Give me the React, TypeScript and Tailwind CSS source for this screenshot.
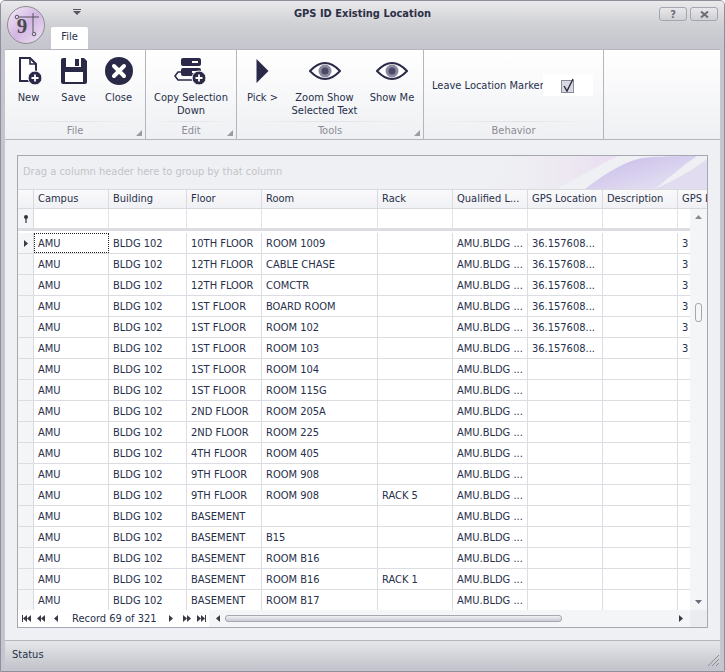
const font = { fontFamily: '"DejaVu Sans Condensed", "Noto Sans", Tahoma, sans-serif' };

const columns = [
  { name: 'Campus', w: 'w-[75px]' },
  { name: 'Building', w: 'w-[78px]' },
  { name: 'Floor', w: 'w-[75px]' },
  { name: 'Room', w: 'w-[116px]' },
  { name: 'Rack', w: 'w-[75px]' },
  { name: 'Qualified L...', w: 'w-[75px]' },
  { name: 'GPS Location', w: 'w-[75px]' },
  { name: 'Description', w: 'w-[75px]' },
  { name: 'GPS L', w: 'w-[60px]' },
];

const q = 'AMU.BLDG ...';
const g = '36.157608...';

const rows = [
  ['AMU', 'BLDG 102', '10TH FLOOR', 'ROOM 1009', '', q, g, '', '3'],
  ['AMU', 'BLDG 102', '12TH FLOOR', 'CABLE CHASE', '', q, g, '', '3'],
  ['AMU', 'BLDG 102', '12TH FLOOR', 'COMCTR', '', q, g, '', '3'],
  ['AMU', 'BLDG 102', '1ST FLOOR', 'BOARD ROOM', '', q, g, '', '3'],
  ['AMU', 'BLDG 102', '1ST FLOOR', 'ROOM 102', '', q, g, '', '3'],
  ['AMU', 'BLDG 102', '1ST FLOOR', 'ROOM 103', '', q, g, '', '3'],
  ['AMU', 'BLDG 102', '1ST FLOOR', 'ROOM 104', '', q, '', '', ''],
  ['AMU', 'BLDG 102', '1ST FLOOR', 'ROOM 115G', '', q, '', '', ''],
  ['AMU', 'BLDG 102', '2ND FLOOR', 'ROOM 205A', '', q, '', '', ''],
  ['AMU', 'BLDG 102', '2ND FLOOR', 'ROOM 225', '', q, '', '', ''],
  ['AMU', 'BLDG 102', '4TH FLOOR', 'ROOM 405', '', q, '', '', ''],
  ['AMU', 'BLDG 102', '9TH FLOOR', 'ROOM 908', '', q, '', '', ''],
  ['AMU', 'BLDG 102', '9TH FLOOR', 'ROOM 908', 'RACK 5', q, '', '', ''],
  ['AMU', 'BLDG 102', 'BASEMENT', '', '', q, '', '', ''],
  ['AMU', 'BLDG 102', 'BASEMENT', 'B15', '', q, '', '', ''],
  ['AMU', 'BLDG 102', 'BASEMENT', 'ROOM B16', '', q, '', '', ''],
  ['AMU', 'BLDG 102', 'BASEMENT', 'ROOM B16', 'RACK 1', q, '', '', ''],
  ['AMU', 'BLDG 102', 'BASEMENT', 'ROOM B17', '', q, '', '', ''],
];

const Logo = () => (
  <div className="absolute left-[6px] top-[5px] flex h-[38px] w-[38px] items-center justify-center rounded-full border border-[#8d8d94] bg-gradient-to-br from-[#f6eef9] via-[#d3b6e2] to-[#efe4f4]">
    <svg width="30" height="30" viewBox="0 0 30 30" className="absolute left-[4px] top-[4px]" fill="none" stroke="#55555f" strokeWidth="1">
      <circle cx="5" cy="6" r="1.8" />
      <circle cx="22" cy="23" r="1.8" />
      <path d="M7 6 H27 M21 2 V21" />
    </svg>
    <span className="relative mr-[8px] mt-[3px] text-[21px] font-bold leading-none text-[#4a4a52]" style={{ fontFamily: '"Liberation Serif", serif' }}>9</span>
  </div>
);

const Plus = ({ cx, cy }: { cx: number; cy: number }) => (
  <g>
    <circle cx={cx} cy={cy} r="7" fill="#2a2a48" stroke="#fff" strokeWidth="1" />
    <path d={`M${cx - 3.5} ${cy} H${cx + 3.5} M${cx} ${cy - 3.5} V${cy + 3.5}`} stroke="#fff" strokeWidth="1.8" />
  </g>
);

const NewIcon = () => (
  <svg width="28" height="30" viewBox="0 0 28 30" fill="none">
    <path d="M5 2 H15 L21 8 V25 H5 Z" stroke="#2a2a48" strokeWidth="2" fill="#fff" />
    <path d="M15 2 V8 H21" stroke="#2a2a48" strokeWidth="1.6" />
    <Plus cx={20} cy={22} />
  </svg>
);

const SaveIcon = () => (
  <svg width="28" height="28" viewBox="0 0 28 28">
    <path d="M1 3 Q1 1 3 1 H24 L27 4 V25 Q27 27 25 27 H3 Q1 27 1 25 Z" fill="#2a2a48" />
    <rect x="6" y="1" width="15" height="9" fill="#fff" />
    <rect x="15" y="2" width="4" height="7" fill="#2a2a48" />
    <rect x="5" y="15" width="18" height="10" fill="#fff" />
  </svg>
);

const CloseIcon = () => (
  <svg width="28" height="28" viewBox="0 0 28 28">
    <circle cx="14" cy="14" r="14" fill="#2a2a48" />
    <path d="M9 9 L19 19 M19 9 L9 19" stroke="#fff" strokeWidth="4" strokeLinecap="round" />
  </svg>
);

const CopyDownIcon = () => (
  <svg width="34" height="28" viewBox="0 0 34 28">
    <rect x="7" y="1" width="20" height="8" rx="2" fill="#2a2a48" />
    <rect x="7" y="11" width="20" height="8" rx="2" fill="#2a2a48" />
    <rect x="18" y="4" width="6" height="2" fill="#fff" />
    <rect x="18" y="14" width="6" height="2" fill="#fff" />
    <path d="M7 15 H4 L1 19 L4 23 H18" fill="none" stroke="#2a2a48" strokeWidth="1.6" />
    <Plus cx={25} cy={21} />
  </svg>
);

const PickIcon = () => (
  <svg width="13" height="24" viewBox="0 0 13 24">
    <path d="M0.5 0 L12.5 12 L0.5 24 Z" fill="#2a2a48" />
  </svg>
);

const EyeIcon = () => (
  <svg width="32" height="20" viewBox="0 0 32 20">
    <path d="M1 10 Q16 -6 31 10 Q16 26 1 10 Z" fill="#fff" stroke="#2a2a48" strokeWidth="2" />
    <circle cx="16" cy="10" r="6.5" fill="#8a8aa0" />
    <circle cx="16" cy="10" r="3.5" fill="#4a4a68" />
  </svg>
);

const RibbonButton = ({ icon, lines, w }: { icon: React.ReactNode; lines: string[]; w: string }) => (
  <div className={`flex ${w} flex-col items-center`}>
    <div className="flex h-[34px] items-center justify-center">{icon}</div>
    <div className="mt-[3px] whitespace-nowrap text-center text-[11px] leading-[13px] text-[#27304a]">
      {lines.map((l) => (
        <div key={l}>{l}</div>
      ))}
    </div>
  </div>
);

const RibbonGroup = ({ title, w, launcher, children }: { title: string; w: string; launcher?: boolean; children: React.ReactNode }) => (
  <div className={`relative flex ${w} shrink-0 flex-col border-r border-[#b4b5bd]`}>
    <div className="flex h-[71px] shrink-0 pt-[4px]">{children}</div>
    <div className="mx-[6px] h-px shrink-0 bg-gradient-to-r from-transparent via-[#e1e2e6] to-transparent" />
    <div className="min-h-0 flex-1 text-center text-[11px] leading-[18px] text-[#8c8d96]">{title}</div>
    {launcher && (
      <svg width="6" height="6" viewBox="0 0 6 6" className="absolute bottom-[3px] right-[3px]">
        <path d="M6 0 V6 H0 Z" fill="#9a9ba3" />
      </svg>
    )}
  </div>
);

const Tri = ({ dir }: { dir: 'l' | 'r' }) => (
  <svg width="4" height="7" viewBox="0 0 4 7">
    <path d={dir === 'l' ? 'M4 0 V7 L0 3.5 Z' : 'M0 0 V7 L4 3.5 Z'} fill="#3a3a46" />
  </svg>
);

const NavBtn = ({ kids, edge, w }: { kids: ('l' | 'r')[]; edge?: 'l' | 'r'; w: string }) => (
  <div className={`flex ${w} items-center justify-center`}>
    {edge === 'l' && <div className="h-[7px] w-px bg-[#3a3a46]" />}
    {kids.map((k, i) => (
      <Tri key={i} dir={k} />
    ))}
    {edge === 'r' && <div className="h-[7px] w-px bg-[#3a3a46]" />}
  </div>
);

const GroupDecor = () => (
  <svg className="absolute right-0 top-0" width="260" height="33" viewBox="0 0 260 33" fill="none">
    <defs>
      <linearGradient id="pinkBand" x1="0" y1="0" x2="1" y2="0">
        <stop offset="0" stopColor="#eff0f3" stopOpacity="0" />
        <stop offset="1" stopColor="#e9dcf0" />
      </linearGradient>
      <linearGradient id="lavBand" x1="0" y1="0" x2="1" y2="1">
        <stop offset="0" stopColor="#c6b9e8" />
        <stop offset="1" stopColor="#e9e6f4" />
      </linearGradient>
    </defs>
    <path d="M65 0 H171 C150 10 130 22 110 33 H30 C40 22 52 10 65 0 Z" fill="url(#pinkBand)" />
    <path d="M138 33 C155 20 175 6 195 2 C215 0 240 0 250 0 C235 10 222 22 208 33 Z" fill="url(#lavBand)" />
    <path d="M208 33 C225 25 245 15 260 3 V33 Z" fill="#e2dcf1" />
  </svg>
);

const App = () => {
  return (
    <div className="relative flex h-[672px] w-[725px] flex-col overflow-hidden rounded-t-[5px] border border-[#8f8f9a] bg-[#c4c5ce] px-[4px] pb-[4px]" style={font}>
      {/* Title bar */}
      <div className="-mx-[4px] flex h-[48px] flex-col bg-gradient-to-b from-[#eaeaec] via-[#cfd0d4] to-[#c4c5cd] px-[4px]">
        <div className="relative flex h-[26px] items-center justify-center pt-[1px]">
          <span className="text-[11px] font-bold text-[#2b2f45]">GPS ID Existing Location</span>
          <svg width="8" height="7" viewBox="0 0 8 7" className="absolute left-[68px] top-[8px]">
            <rect x="0" y="0" width="8" height="1" fill="#55555f" />
            <path d="M0 2 H8 L4 6 Z" fill="#55555f" />
          </svg>
          <div className="absolute right-[2px] top-[6px] flex gap-[3px]">
            <div className="flex h-[14px] w-[28px] items-center justify-center rounded-[3px] border border-[#a4a5ad] bg-gradient-to-b from-[#e8e8eb] to-[#cfd0d5] text-[11px] font-bold leading-none text-[#6c6d76]">?</div>
            <div className="flex h-[14px] w-[28px] items-center justify-center rounded-[3px] border border-[#a4a5ad] bg-gradient-to-b from-[#e8e8eb] to-[#cfd0d5]">
              <svg width="9" height="7" viewBox="0 0 9 7"><path d="M1 0.5 L8 6.5 M8 0.5 L1 6.5" stroke="#6c6d76" strokeWidth="2" /></svg>
            </div>
          </div>
        </div>
        <div className="relative z-10 ml-[46px] mt-px flex h-[23px] w-[37px] items-center justify-center rounded-t-[2px] bg-white pb-[1px] text-[11px] text-[#27304a]">File</div>
      </div>
      <Logo />

      {/* Ribbon */}
      <div className="flex h-[91px] shrink-0 border-y border-[#b4b5bd] bg-gradient-to-b from-white to-[#eff0f3]">
        <RibbonGroup title="File" w="w-[141px]" launcher>
          <div className="flex pl-[1px]">
            <RibbonButton icon={<NewIcon />} lines={['New']} w="w-[45px]" />
            <RibbonButton icon={<SaveIcon />} lines={['Save']} w="w-[45px]" />
            <RibbonButton icon={<CloseIcon />} lines={['Close']} w="w-[45px]" />
          </div>
        </RibbonGroup>
        <RibbonGroup title="Edit" w="w-[91px]" launcher>
          <RibbonButton icon={<CopyDownIcon />} lines={['Copy Selection', 'Down']} w="w-[90px]" />
        </RibbonGroup>
        <RibbonGroup title="Tools" w="w-[187px]" launcher>
          <div className="flex pl-[2px]">
            <RibbonButton icon={<PickIcon />} lines={['Pick >']} w="w-[47px]" />
            <RibbonButton icon={<EyeIcon />} lines={['Zoom Show', 'Selected Text']} w="w-[77px]" />
            <RibbonButton icon={<EyeIcon />} lines={['Show Me']} w="w-[58px]" />
          </div>
        </RibbonGroup>
        <RibbonGroup title="Behavior" w="w-[180px]">
          <div className="flex h-[62px] items-center pl-[8px]">
            <span className="w-[111px] whitespace-nowrap pt-[2px] text-[11px] text-[#27304a]">Leave Location Marker</span>
            <div className="flex h-[22px] w-[50px] items-center justify-center bg-white">
              <svg width="14" height="15" viewBox="0 0 14 15">
                <rect x="0.5" y="2.5" width="12" height="12" fill="#d8d9e2" stroke="#8a8b96" />
                <path d="M3 8 L6 13 L12 1" fill="none" stroke="#2a2a3a" strokeWidth="1.4" />
              </svg>
            </div>
          </div>
        </RibbonGroup>
        <div className="flex-1" />
      </div>

      {/* Content */}
      <div className="flex min-h-0 flex-1 flex-col bg-[#eff0f3] px-[12px] pb-[12px] pt-[15px]">
        <div className="flex min-h-0 flex-1 flex-col overflow-hidden border border-[#a6a7b0] bg-white text-[11px] text-[#27304a]">
          {/* Group panel */}
          <div className="relative flex h-[33px] shrink-0 items-center overflow-hidden bg-[#eff0f3] pl-[5px] text-[#c2c3ca]">
            <span className="relative">Drag a column header here to group by that column</span>
            <GroupDecor />
          </div>
          {/* Header */}
          <div className="flex h-[20px] shrink-0 border-y border-[#d9dae0] bg-gradient-to-b from-[#fafafb] to-[#f0f1f4]">
            <div className="w-[16px] shrink-0 border-r border-[#d9dae0]" />
            {columns.map((c) => (
              <div key={c.name} className={`${c.w} shrink-0 overflow-hidden whitespace-nowrap border-r border-[#d9dae0] pl-[4px] leading-[17px]`}>{c.name}</div>
            ))}
          </div>
          {/* Filter row + records */}
          <div className="flex min-h-0 flex-1">
            <div className="min-w-0 flex-1 overflow-hidden">
              <div className="flex h-[22px] border-b-[3px] border-[#dcdde2]">
                <div className="flex w-[16px] shrink-0 items-center justify-center border-r border-[#d9dae0] bg-[#f4f5f7]">
                  <svg width="6" height="8" viewBox="0 0 6 8">
                    <circle cx="3" cy="2" r="2" fill="#33333f" />
                    <rect x="2.4" y="3" width="1.2" height="5" fill="#33333f" />
                  </svg>
                </div>
                {columns.map((c) => (
                  <div key={c.name} className={`${c.w} shrink-0 border-r border-[#e2e3e8]`} />
                ))}
              </div>
              <div className="h-[2px]" />
              {rows.map((r, i) => (
                <div key={i} className="flex h-[21px] border-b border-[#dcdde2]">
                  <div className="flex w-[16px] shrink-0 items-center justify-center border-r border-[#d9dae0] bg-[#f4f5f7]">
                    {i === 0 && <Tri dir="r" />}
                  </div>
                  {r.map((cell, j) => (
                    <div
                      key={j}
                      className={
                        i === 0 && j === 0
                          ? `${columns[j].w} shrink-0 overflow-hidden whitespace-nowrap border border-dotted border-[#222] pl-[3px] leading-[20px]`
                          : `${columns[j].w} shrink-0 overflow-hidden whitespace-nowrap border-r border-[#dcdde2] pl-[4px] leading-[22px]`
                      }
                    >
                      {cell}
                    </div>
                  ))}
                </div>
              ))}
            </div>
            {/* Vertical scrollbar */}
            <div className="relative flex w-[17px] shrink-0 flex-col items-center bg-[#f4f5f7]">
              <svg width="7" height="4" viewBox="0 0 7 4" className="mt-[6px]"><path d="M0 4 L3.5 0 L7 4 Z" fill="#8a8b96" /></svg>
              <div className="absolute left-[5px] top-[94px] h-[19px] w-[7px] rounded-[3px] border border-[#a6a7b0] bg-[#f6f6f8]" />
              <svg width="7" height="4" viewBox="0 0 7 4" className="mt-auto mb-[6px]"><path d="M0 0 L3.5 4 L7 0 Z" fill="#6c6d7a" /></svg>
            </div>
          </div>
          {/* Navigator + horizontal scrollbar */}
          <div className="flex h-[17px] shrink-0 items-center">
            <div className="flex w-[191px] shrink-0 items-center bg-white pl-[1px]">
              <NavBtn kids={['l', 'l']} edge="l" w="w-[14px]" />
              <NavBtn kids={['l', 'l']} w="w-[16px]" />
              <NavBtn kids={['l']} w="w-[14px]" />
              <span className="ml-[9px] w-[91px] whitespace-nowrap pt-[1px] text-[#27304a]">Record 69 of 321</span>
              <NavBtn kids={['r']} w="w-[16px]" />
              <NavBtn kids={['r', 'r']} w="w-[15px]" />
              <NavBtn kids={['r', 'r']} edge="r" w="w-[15px]" />
            </div>
            <div className="flex h-full min-w-0 flex-1 items-center bg-[#f4f5f7] pl-[7px] pr-[7px]">
              <Tri dir="l" />
              <div className="ml-[5px] h-[7px] w-[337px] rounded-[3px] border border-[#a6a7b0] bg-gradient-to-b from-[#f2f2f5] to-[#c9cad2]" />
              <div className="ml-auto"><Tri dir="r" /></div>
            </div>
            <div className="h-full w-[17px] shrink-0 bg-[#ebecef]" />
          </div>
        </div>
      </div>

      {/* Status bar */}
      <div className="relative flex h-[27px] shrink-0 items-center border-t border-[#b4b5bd] bg-gradient-to-b from-[#e6e7ea] to-[#c5c6cd] pl-[7px] pt-[3px] text-[11px] text-[#27304a]">
        Status
        <svg width="11" height="11" viewBox="0 0 11 11" className="absolute bottom-[1px] right-[1px]" stroke="#8a8b96" strokeWidth="1">
          <path d="M0 11 L11 0 M4 11 L11 4 M8 11 L11 8" />
        </svg>
      </div>
    </div>
  );
};

export default App;
